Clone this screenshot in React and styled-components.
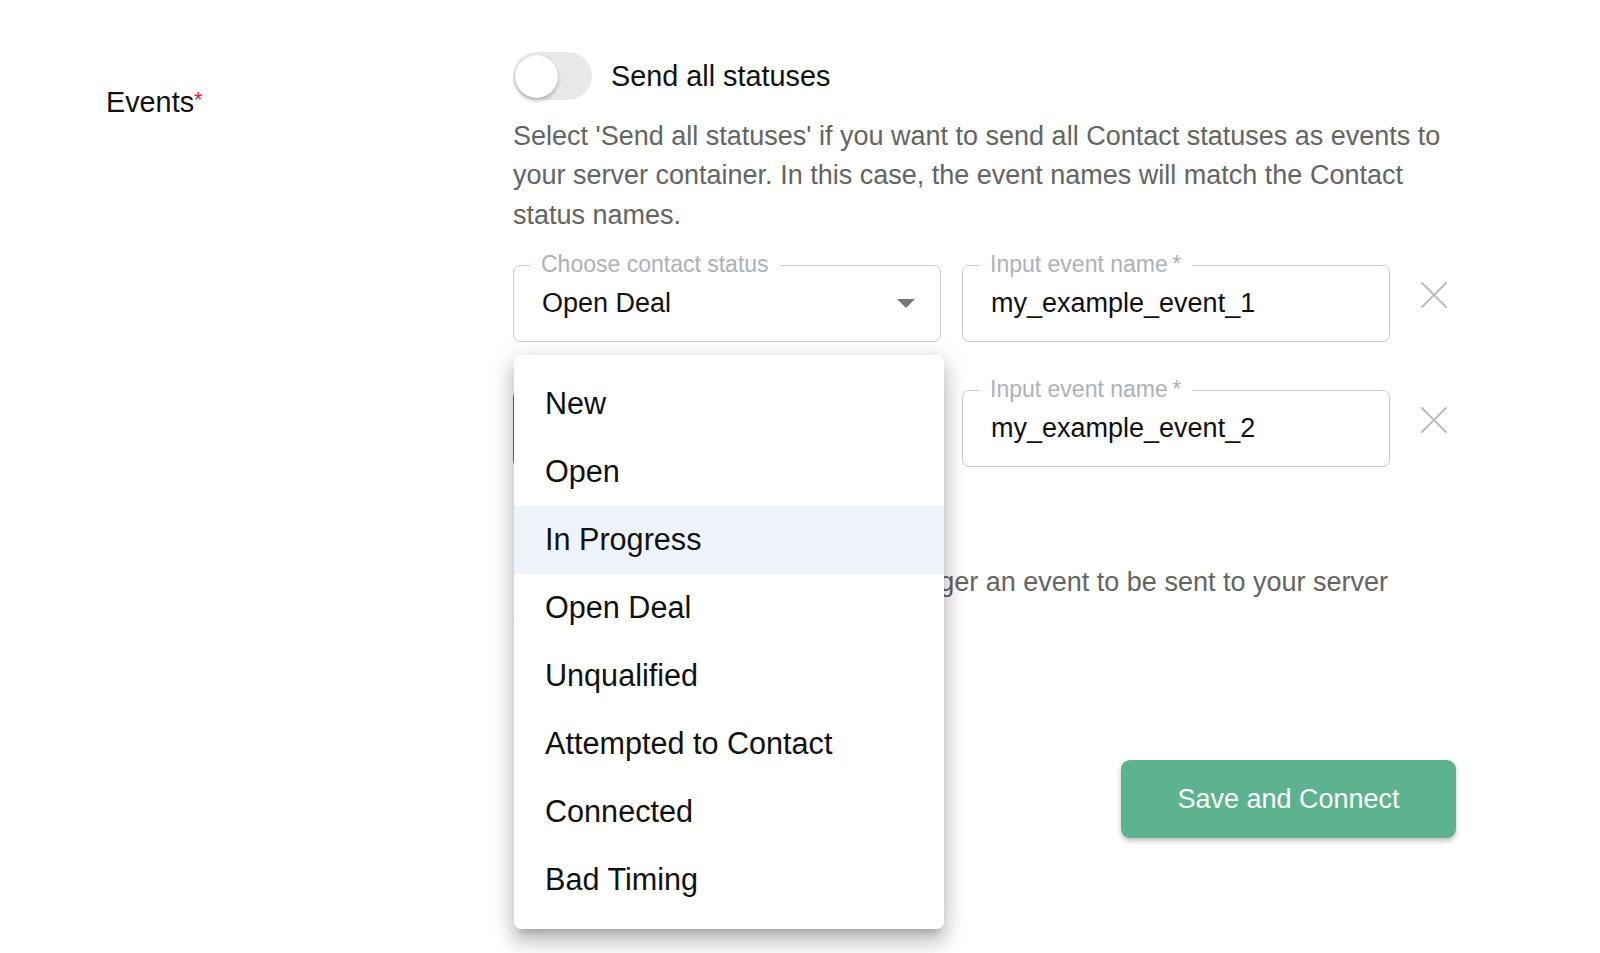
import styled, { createGlobalStyle } from "styled-components";

const statuses = [
  "New",
  "Open",
  "In Progress",
  "Open Deal",
  "Unqualified",
  "Attempted to Contact",
  "Connected",
  "Bad Timing",
];

export default function App() {
  return (
    <>
      <GlobalStyle />
      <Page>
        <FieldLabel>
          Events<Required>*</Required>
        </FieldLabel>

        <Content>
          <ToggleRow>
            <Track>
              <Thumb />
            </Track>
            <ToggleText>Send all statuses</ToggleText>
          </ToggleRow>

          <Description>
            Select 'Send all statuses' if you want to send all Contact statuses
            as events to your server container. In this case, the event names
            will match the Contact status names.
          </Description>

          <EventRows>
            <EventRow>
              <Field>
                <FloatLabel>Choose contact status</FloatLabel>
                <Box>
                  Open Deal
                  <Arrow />
                </Box>
              </Field>
              <Field>
                <FloatLabel>Input event name{"\u2009"}*</FloatLabel>
                <Box>my_example_event_1</Box>
              </Field>
              <RemoveButton aria-label="Remove">
                <CloseIcon />
              </RemoveButton>
            </EventRow>

            <EventRow>
              <Field>
                <Box focused>
                  <Arrow />
                </Box>
                <Menu>
                  {statuses.map((s) => (
                    <MenuItem key={s} active={s === "In Progress"}>
                      {s}
                    </MenuItem>
                  ))}
                </Menu>
              </Field>
              <Field>
                <FloatLabel>Input event name{"\u2009"}*</FloatLabel>
                <Box>my_example_event_2</Box>
              </Field>
              <RemoveButton aria-label="Remove">
                <CloseIcon />
              </RemoveButton>
            </EventRow>
          </EventRows>

          <Description spaced>
            Select the Contact statuses that trigger an event to be sent to
            your server container.
          </Description>

          <Footer>
            <SaveButton>Save and Connect</SaveButton>
          </Footer>
        </Content>
      </Page>
    </>
  );
}

function CloseIcon() {
  return (
    <svg width="26" height="26" viewBox="0 0 26 26" fill="none">
      <path
        d="M1 1L25 25M25 1L1 25"
        stroke="#b7bdc4"
        strokeWidth="2"
        strokeLinecap="round"
      />
    </svg>
  );
}

const GlobalStyle = createGlobalStyle`
  body {
    margin: 0;
    background: #ffffff;
    font-family: "Liberation Sans", Arial, Helvetica, sans-serif;
  }
`;

const Page = styled.div`
  display: grid;
  grid-template-columns: 407px 943px;
  align-items: start;
  min-height: 953px;
  box-sizing: border-box;
  padding: 52px 0 0 106px;
`;

const FieldLabel = styled.div`
  margin-top: 30px;
  font-size: 28.8px;
  line-height: 40px;
  color: #111111;
`;

const Required = styled.span`
  font-size: 22px;
  line-height: 1;
  color: #e8231d;
  vertical-align: 5px;
`;

const Content = styled.div`
  display: flex;
  flex-direction: column;
`;

const ToggleRow = styled.div`
  display: flex;
  align-items: center;
  gap: 19px;
  height: 48px;
`;

const Track = styled.div`
  display: flex;
  align-items: center;
  width: 79px;
  height: 48px;
  padding: 0 2px;
  box-sizing: border-box;
  border-radius: 24px;
  background: #e9e9ea;
`;

const Thumb = styled.div`
  width: 43px;
  height: 43px;
  border-radius: 50%;
  background: #ffffff;
  box-shadow: 0 3px 4px rgba(0, 0, 0, 0.22), 0 0 1px rgba(0, 0, 0, 0.2);
`;

const ToggleText = styled.span`
  font-size: 28.8px;
  color: #111111;
`;

const Description = styled.p`
  margin: ${({ spaced }) => (spaced ? "96px 0 0" : "17px 0 0")};
  font-size: 27px;
  line-height: 39.3px;
  color: #646464;
`;

const EventRows = styled.div`
  display: flex;
  flex-direction: column;
  gap: 48px;
  margin-top: 30px;
`;

const EventRow = styled.div`
  display: flex;
  align-items: flex-start;
  gap: 21px;
`;

const Field = styled.div`
  position: relative;
  flex: 1;
`;

const FloatLabel = styled.span`
  position: absolute;
  top: -13px;
  left: 17px;
  padding: 0 11px;
  background: #ffffff;
  font-size: 23px;
  line-height: 25px;
  color: #abb2ba;
`;

const Box = styled.div`
  display: flex;
  align-items: center;
  height: 77px;
  box-sizing: border-box;
  padding: 0 25px 0 28px;
  border: ${({ focused }) =>
    focused ? "2px solid #4a6cc4" : "1px solid #c7ccd1"};
  border-radius: 7px;
  font-size: 27px;
  color: #111111;
`;

const Arrow = styled.span`
  margin-left: auto;
  width: 0;
  height: 0;
  border-left: 9.5px solid transparent;
  border-right: 9.5px solid transparent;
  border-top: 9px solid #757575;
`;

const RemoveButton = styled.button`
  display: flex;
  align-items: center;
  justify-content: center;
  width: 45px;
  height: 45px;
  margin-top: 8px;
  padding: 0;
  border: none;
  background: none;
  cursor: pointer;
`;

const Menu = styled.ul`
  position: absolute;
  top: -35px;
  left: 1px;
  z-index: 10;
  width: 430px;
  margin: 0;
  padding: 15px 0;
  list-style: none;
  background: #ffffff;
  border-radius: 7px;
  box-shadow: 0 8px 9px -5px rgba(0, 0, 0, 0.2),
    0 14px 18px 2px rgba(0, 0, 0, 0.14), 0 5px 24px 4px rgba(0, 0, 0, 0.12);
`;

const MenuItem = styled.li`
  display: flex;
  align-items: center;
  height: 68px;
  padding-left: 31px;
  font-size: 30.6px;
  color: #111111;
  background: ${({ active }) => (active ? "#eef3fa" : "transparent")};
`;

const Footer = styled.div`
  display: flex;
  justify-content: flex-end;
  margin-top: 119px;
`;

const SaveButton = styled.button`
  width: 335px;
  height: 78px;
  border: none;
  border-radius: 9px;
  background: #5db28f;
  color: #ffffff;
  font-family: inherit;
  font-size: 27px;
  box-shadow: 0 3px 5px rgba(0, 0, 0, 0.25);
  cursor: pointer;
`;
